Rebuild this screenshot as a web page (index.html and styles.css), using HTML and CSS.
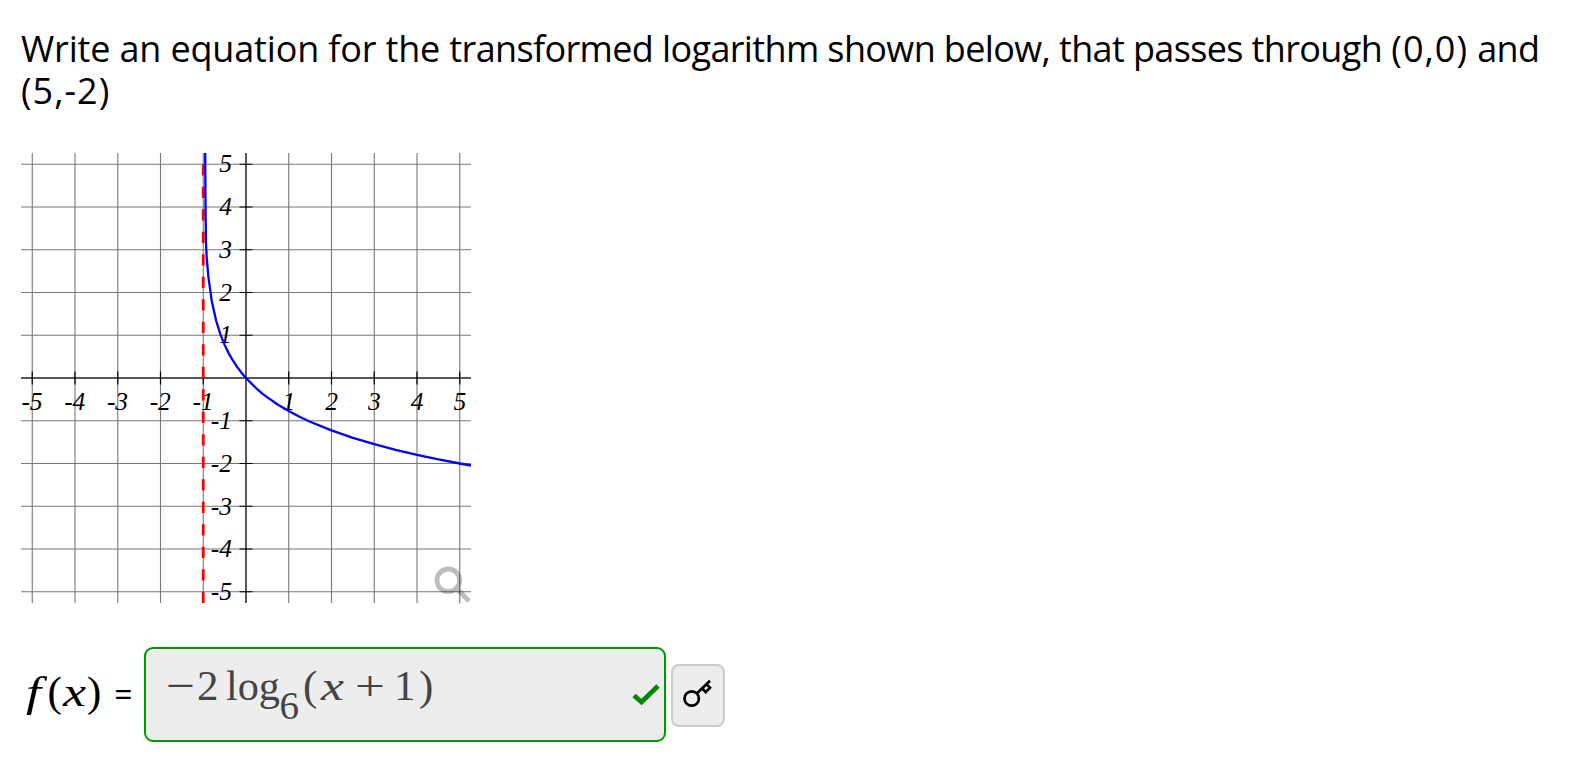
FILE: index.html
```html
<!DOCTYPE html>
<html lang="en">
<head>
    <meta charset="UTF-8">
    <meta name="viewport" content="width=device-width, initial-scale=1.0">
    <title>Transformed Logarithm</title>
    <link rel="stylesheet" href="styles.css">
</head>
<body>
    <div class="question">
        <p class="prompt">Write an equation for the <span class="tight">transformed logarithm shown below, that passes through</span> <span class="point">(0,0)</span> <span class="tight">and</span><br><span class="point">(5,-2)</span></p>

        <svg class="graph" width="450" height="450" viewBox="0 0 450 450">
            <path class="grid" d="M11.25 0V450M54 0V450M96.75 0V450M139.5 0V450M182.25 0V450M267.75 0V450M310.5 0V450M353.25 0V450M396 0V450M438.75 0V450"/>
            <path class="grid" d="M0 11.25H450M0 54H450M0 96.75H450M0 139.5H450M0 182.25H450M0 267.75H450M0 310.5H450M0 353.25H450M0 396H450M0 438.75H450"/>
            <path class="axis" d="M225 0V450M0 225H450"/>
            <path class="tick" d="M11.25 218.5v13M54 218.5v13M96.75 218.5v13M139.5 218.5v13M182.25 218.5v13M267.75 218.5v13M310.5 218.5v13M353.25 218.5v13M396 218.5v13M438.75 218.5v13"/>
            <path class="tick" d="M218.5 11.25h13M218.5 54h13M218.5 96.75h13M218.5 139.5h13M218.5 182.25h13M218.5 267.75h13M218.5 310.5h13M218.5 353.25h13M218.5 396h13M218.5 438.75h13"/>
            <g class="x-labels">
                <text x="11" y="256.5">-5</text>
                <text x="53.75" y="256.5">-4</text>
                <text x="96.5" y="256.5">-3</text>
                <text x="139.25" y="256.5">-2</text>
                <text x="182" y="256.5">-1</text>
                <text x="267.75" y="256.5">1</text>
                <text x="310.5" y="256.5">2</text>
                <text x="353.25" y="256.5">3</text>
                <text x="396" y="256.5">4</text>
                <text x="438.75" y="256.5">5</text>
            </g>
            <g class="y-labels">
                <text x="211" y="19.25">5</text>
                <text x="211" y="62">4</text>
                <text x="211" y="104.75">3</text>
                <text x="211" y="147.5">2</text>
                <text x="211" y="190.25">1</text>
                <text x="211" y="276">-1</text>
                <text x="211" y="318.75">-2</text>
                <text x="211" y="361.5">-3</text>
                <text x="211" y="404.25">-4</text>
                <text x="211" y="447">-5</text>
            </g>
            <path class="asymptote" d="M182.25 450V0"/>
            <polyline class="curve" points="184.2,0 184.6,60 185,90 185.7,104.5 187.4,123.8 190.8,148.2 195.1,167.5 199.4,181.3 203.6,191.9 207.9,200.6 212.2,208 216.5,214.4 220.7,220 225,225 230.3,230.4 235.7,235.7 241,240.3 246.4,244.4 257,251.7 267.8,258.1 278.4,263.7 289.1,268.7 310.5,277.4 331.9,284.8 353.3,291.2 374.6,296.8 396,301.8 417.4,306.3 438.8,310.5 450,312.5"/>
            <g class="magnify">
                <circle cx="427.3" cy="427.3" r="11.3"/>
                <path d="M436 436L448 448"/>
            </g>
        </svg>

        <div class="answer">
            <svg class="math label" width="82" height="60" viewBox="0 0 82 60">
                <text class="it" x="5" y="41" textLength="15" lengthAdjust="spacingAndGlyphs">f</text>
                <text x="26.5" y="41">(</text>
                <text class="it" x="42" y="41" textLength="23" lengthAdjust="spacingAndGlyphs">x</text>
                <text x="66" y="41">)</text>
            </svg>
            <span class="equals">=</span>
            <div class="answer-box">
                <svg class="math" width="280" height="70" viewBox="0 0 280 70">
                    <text x="0" y="43" textLength="29" lengthAdjust="spacingAndGlyphs">−</text>
                    <text x="31" y="43">2</text>
                    <text x="60" y="43" textLength="54" lengthAdjust="spacingAndGlyphs">log</text>
                    <text class="sub" x="113.5" y="61.5">6</text>
                    <text x="137" y="43">(</text>
                    <text class="it" x="155" y="43" textLength="23" lengthAdjust="spacingAndGlyphs">x</text>
                    <text x="189" y="43" textLength="30" lengthAdjust="spacingAndGlyphs">+</text>
                    <text x="228" y="43">1</text>
                    <text x="253" y="43">)</text>
                </svg>
                <svg class="check" width="28" height="22" viewBox="0 0 28 22">
                    <path d="M2 11.5L9.5 18L26 2"/>
                </svg>
            </div>
            <button type="button" class="key-button" aria-label="Show answer">
                <svg width="32" height="32" viewBox="0 0 32 32">
                    <circle cx="9.7" cy="18.5" r="7.2"/>
                    <path d="M15 13.2L28 .8M24.5 4.3l3.5 3.5l-4.3 4.3L20.1 8.3"/>
                </svg>
            </button>
        </div>
    </div>
</body>
</html>
```
FILE: styles.css
```css
body {
    font-family: "Trebuchet MS", "Open Sans", sans-serif;
    background-color: #fff;
    color: #000;
    margin: 0;
}
.question {
    padding: 28px 21px 0;
}
.prompt {
    margin: 0 0 41px;
    font-size: 36px;
    line-height: 42px;
    letter-spacing: -0.16px;
    white-space: nowrap;
}
.tight {
    letter-spacing: -0.63px;
}
.point {
    letter-spacing: 1px;
}
.graph {
    display: block;
    overflow: visible;
}
.grid {
    stroke: #777;
    stroke-width: 1.1;
}
.axis {
    stroke: #222;
    stroke-width: 1.5;
}
.tick {
    stroke: #000;
    stroke-width: 1.2;
}
.x-labels,
.y-labels {
    font-family: "Liberation Serif", serif;
    font-style: italic;
    font-size: 25.5px;
}
.x-labels {
    text-anchor: middle;
}
.y-labels {
    text-anchor: end;
}
.asymptote {
    stroke: #f00;
    stroke-width: 2.8;
    stroke-dasharray: 11.25;
}
.curve {
    fill: none;
    stroke: #00f;
    stroke-width: 2.3;
}
.magnify {
    fill: none;
    stroke: #000;
    stroke-width: 4.8;
    opacity: 0.25;
}
.answer {
    display: flex;
    align-items: center;
    margin-top: 44px;
}
.math {
    font-family: "Liberation Serif", serif;
    font-size: 43px;
    flex: none;
    overflow: visible;
}
.math .it {
    font-style: italic;
}
.math .sub {
    font-size: 39px;
}
.equals {
    width: 41px;
    margin-top: -3px;
    text-align: center;
    font-size: 32px;
}
.answer-box {
    box-sizing: border-box;
    display: flex;
    align-items: center;
    justify-content: space-between;
    width: 522px;
    height: 95px;
    padding: 0 4px 0 20px;
    background-color: #ededed;
    border: 2px solid #090;
    border-radius: 9px;
}
.answer-box .math {
    fill: #444;
    margin-top: -6px;
}
.check path {
    fill: none;
    stroke: #080;
    stroke-width: 4.8;
}
.key-button {
    display: flex;
    align-items: center;
    justify-content: center;
    width: 54px;
    height: 63px;
    margin: 2px 0 0 5px;
    padding: 0;
    background-color: #ededed;
    border: 2px solid #ccc;
    border-radius: 8px;
}
.key-button svg {
    fill: none;
    stroke: #000;
    stroke-width: 2.7;
    overflow: visible;
}
```
